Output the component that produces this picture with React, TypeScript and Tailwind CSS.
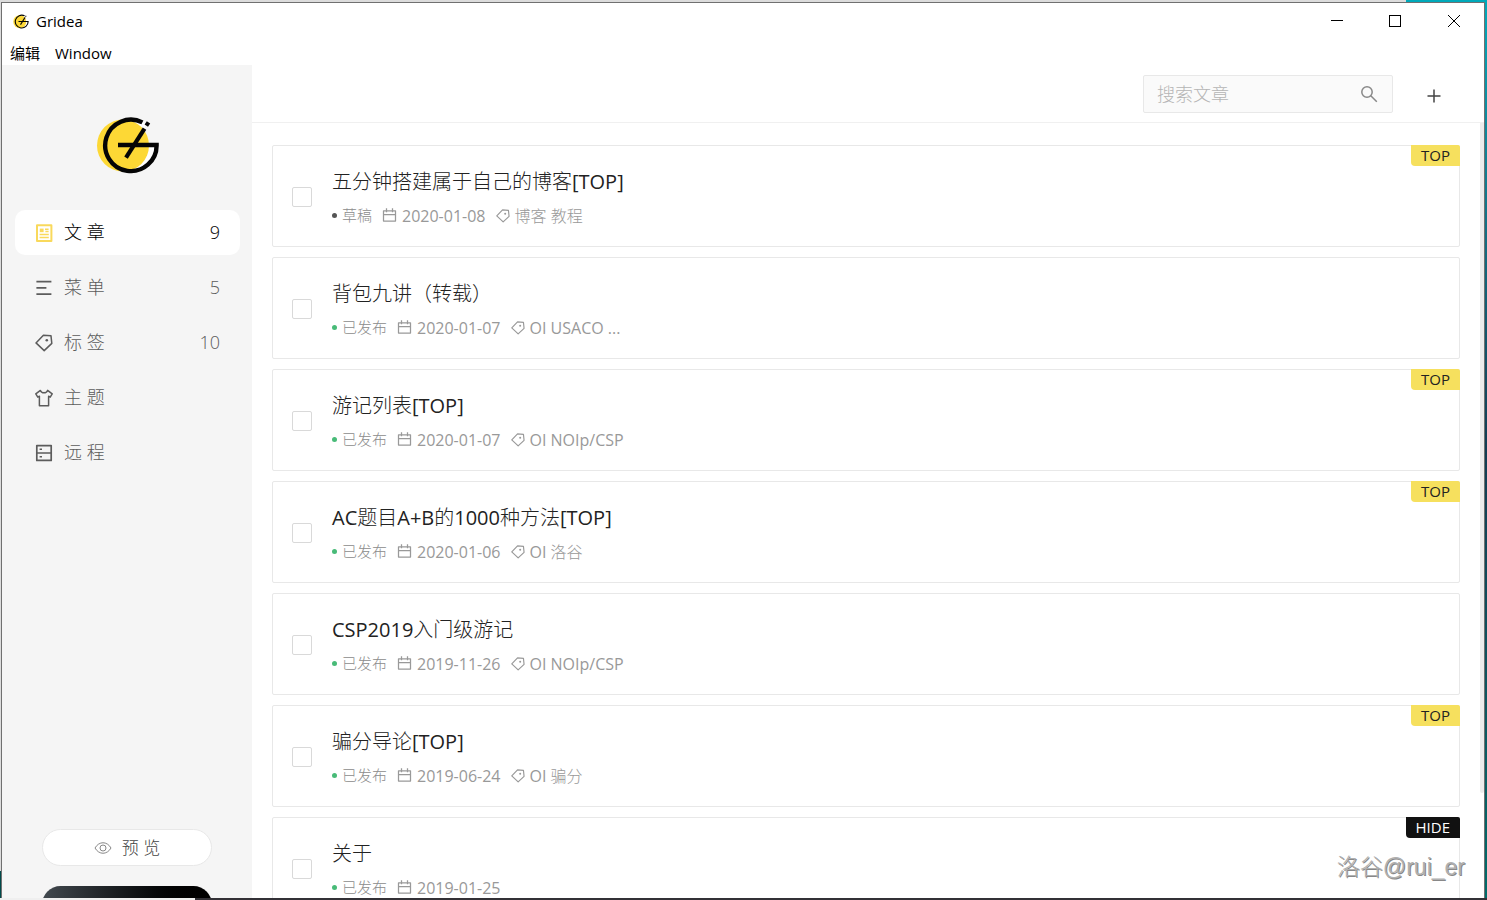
import { FC, ReactNode } from 'react'

type Post = {
  title: string
  date: string
  tags?: string
  draft?: boolean
  badge?: 'TOP' | 'HIDE'
}

const posts: Post[] = [
  { title: '五分钟搭建属于自己的博客[TOP]', date: '2020-01-08', tags: '博客 教程', draft: true, badge: 'TOP' },
  { title: '背包九讲（转载）', date: '2020-01-07', tags: 'OI USACO ...' },
  { title: '游记列表[TOP]', date: '2020-01-07', tags: 'OI NOIp/CSP', badge: 'TOP' },
  { title: 'AC题目A+B的1000种方法[TOP]', date: '2020-01-06', tags: 'OI 洛谷', badge: 'TOP' },
  { title: 'CSP2019入门级游记', date: '2019-11-26', tags: 'OI NOIp/CSP' },
  { title: '骗分导论[TOP]', date: '2019-06-24', tags: 'OI 骗分', badge: 'TOP' },
  { title: '关于', date: '2019-01-25', badge: 'HIDE' },
]

const Logo: FC<{ className: string }> = ({ className }) => (
  <svg viewBox="0 0 64 60" className={className} fill="none" aria-hidden="true">
    <path d="M46 30H60A26 26 0 0 1 34 56ZM36 5L50 8 48 16Z" fill="#fff" />
    <circle cx="27" cy="30.5" r="26" fill="#fdd835" />
    <path d="M46.400 7.400A25.700 25.700 0 1 0 60.600 30H22" stroke="#050505" strokeWidth="4.400" />
    <path d="M48.500 13.600L30 42.600" stroke="#050505" strokeWidth="4.200" />
    <path d="M50.800 6.200l3.400 2.200-2.200 3.400-3.400-2.200z" fill="#050505" />
  </svg>
)

const Icon: FC<{ className?: string; children: ReactNode }> = ({ className = 'size-[18px]', children }) => (
  <svg
    viewBox="0 0 18 18"
    className={`shrink-0 ${className}`}
    fill="none"
    stroke="currentColor"
    strokeWidth="1.5"
    strokeLinejoin="round"
    aria-hidden="true"
  >
    {children}
  </svg>
)

const tagShape = (
  <>
    <path d="M8.400 1.200L16 1.800l.8 7.600-7.600 7.200L1 8.900z" />
    <circle cx="11.800" cy="6.200" r="1.300" fill="currentColor" stroke="none" />
  </>
)

const menus = [
  {
    label: '文 章',
    count: 9,
    active: true,
    icon: (
      <>
        <path d="M2 1.200h14.400v15.800H2z" strokeWidth="2" />
        <path d="M4.800 4.600h3.800v3.600H4.800z" fill="currentColor" stroke="none" />
        <path d="M10 5.200h3.600M10.400 7.600h3.200M4.600 10.600h9.200M4.600 13.600h9.200" />
      </>
    ),
  },
  { label: '菜 单', count: 5, icon: <path d="M1.400 2.600h15M1.400 8.900h10M1.400 15.200h15" strokeWidth="1.700" /> },
  { label: '标 签', count: 10, icon: tagShape },
  {
    label: '主 题',
    icon: <path d="M5.400 1.400L.8 4.900l2 3.200 1.600-.9v9.600h9.200V7.200l1.600.9 2-3.200-4.600-3.500C11.400 4.500 6.600 4.500 5.400 1.400z" />,
  },
  {
    label: '远 程',
    icon: (
      <>
        <path d="M1.800 1.600h14.400v14.800H1.800zM1.800 9h14.400" strokeWidth="1.700" />
        <path d="M4.600 5.300h2.400M4.600 12.700h2.400" />
      </>
    ),
  },
]

const TitleBar = () => (
  <header className="shrink-0 bg-white text-[15px] text-black">
    <div className="flex h-9 items-center justify-between pl-[11px]">
      <div className="flex items-center gap-[7px]">
        <Logo className="h-[15px] w-4" />
        <span>Gridea</span>
      </div>
      <div className="flex h-full">
        <button type="button" aria-label="最小化" className="flex w-[58px] items-center justify-center">
          <svg className="size-3" viewBox="0 0 12 12" stroke="currentColor" shapeRendering="crispEdges">
            <path d="M0 5.500h12" />
          </svg>
        </button>
        <button type="button" aria-label="最大化" className="flex w-[58px] items-center justify-center">
          <svg className="size-3" viewBox="0 0 12 12" fill="none" stroke="currentColor" shapeRendering="crispEdges">
            <path d="M.5.5h11v11H.5z" />
          </svg>
        </button>
        <button type="button" aria-label="关闭" className="flex w-[60px] items-center justify-center">
          <svg className="size-3" viewBox="0 0 12 12" stroke="currentColor">
            <path d="M0 0l12 12M12 0L0 12" />
          </svg>
        </button>
      </div>
    </div>
    <nav className="flex h-[26px] items-center gap-[15px] pt-[2px] pl-2 font-['Open_Sans','Noto_Sans_CJK_SC',sans-serif]">
      <button type="button">编辑</button>
      <button type="button">Window</button>
    </nav>
  </header>
)

const Sidebar = () => (
  <aside className="flex w-[250px] shrink-0 flex-col overflow-hidden bg-[#f5f5f5]">
    <div className="flex shrink-0 justify-center pt-[50px] pb-[35px] pl-[2px]">
      <Logo className="h-[60px] w-16" />
    </div>
    <nav className="flex min-h-0 flex-1 flex-col gap-[10px] pr-3 pl-[13px]">
      {menus.map(({ label, count, active, icon }) => (
        <a
          key={label}
          href="#"
          className={`flex h-[45px] shrink-0 items-center rounded-[10px] px-5 text-lg ${
            active ? 'bg-white text-black' : 'text-[#5c5c5c]'
          }`}
        >
          <Icon className={active ? 'size-[18px] text-[#f9d95c]' : 'size-[18px]'}>{icon}</Icon>
          <span className="ml-[11px] flex-1 pb-[2px]">{label}</span>
          <span className="pb-[2px] font-light">{count}</span>
        </a>
      ))}
    </nav>
    <div className="flex h-[69px] shrink-0 flex-col gap-5 overflow-hidden px-10 text-[17px]">
      <button
        type="button"
        className="flex h-[37px] shrink-0 items-center justify-center gap-[10px] rounded-full border border-[#e8e8e8] bg-white text-[#444]"
      >
        <Icon className="size-[18px] text-[#888]">
          <path d="M1 9c4-7 12-7 16 0-4 7-12 7-16 0z" strokeWidth="1" />
          <circle cx="9" cy="9" r="3" strokeWidth="1" />
        </Icon>
        预 览
      </button>
      <button
        type="button"
        aria-label="同步"
        className="flex h-[37px] shrink-0 justify-center rounded-full bg-linear-to-r from-[#434a50] to-black pt-[10px] pr-9 text-white"
      >
        <Icon>
          <path d="M5 13a4 4 0 0 1 0-8 4.500 4.500 0 0 1 8 0 4 4 0 0 1 0 8M9 16V8" strokeWidth="1" />
        </Icon>
      </button>
    </div>
  </aside>
)

const PostCard: FC<{ post: Post }> = ({ post }) => (
  <article className="relative flex h-[102px] shrink-0 items-center gap-5 rounded-xs border border-[#e8e8e8] px-[19px] pt-[2px]">
    <input
      type="checkbox"
      aria-label={post.title}
      className="size-5 shrink-0 appearance-none rounded-xs border border-[#d9d9d9] bg-white"
    />
    <div className="flex flex-col gap-2 pt-px">
      <a href="#" className="text-xl leading-7 text-[#222]">
        {post.title}
      </a>
      <div className="flex h-6 items-center gap-[10px] text-[15px] text-[#8c8c8c]">
        <span className="flex items-center gap-[5px]">
          <i className={`size-[5px] rounded-full ${post.draft ? 'bg-[#555]' : 'bg-[#48bb78]'}`} />
          {post.draft ? '草稿' : '已发布'}
        </span>
        <span className="flex items-center gap-[5px]">
          <Icon className="size-[15px] text-[#999]">
            <path d="M1.800 3.400h14.400v12.200H1.800zM1.800 7.800h14.400M5.400 .2v5M12.600 .2v5" />
          </Icon>
          <time className="text-base text-[#999]">{post.date}</time>
        </span>
        {post.tags && (
          <span className="flex items-center gap-[5px]">
            <Icon className="size-[14px] text-[#999]">{tagShape}</Icon>
            <span className="text-base text-[#999]">{post.tags}</span>
          </span>
        )}
      </div>
    </div>
    {post.badge && (
      <span
        className={`absolute -top-px -right-px rounded-tr-xs rounded-bl-sm px-[10px] text-[15px] leading-[21px] ${
          post.badge === 'TOP' ? 'bg-[#f6e05e] text-[#222]' : 'bg-[#111] text-white'
        }`}
      >
        {post.badge}
      </span>
    )}
  </article>
)

const App = () => {
  return (
    <div className="relative flex h-screen flex-col overflow-hidden font-['Open_Sans','Noto_Sans_CJK_SC_Light','Noto_Sans_CJK_SC',sans-serif]">
      <div className="flex h-[2px] shrink-0">
        <div className="flex-1 bg-[#dcdcdc]" />
        <div className="w-[81px] bg-[#00a9ba]" />
      </div>
      <div className="flex min-h-0 flex-1">
        <div className="w-px bg-linear-to-b from-[#dcdcdc] from-97% to-[#004a4a] to-97%" />
        <div className="flex min-h-0 min-w-0 flex-1 flex-col border-t border-r border-l border-[#707070] bg-white">
          <TitleBar />
          <div className="flex min-h-0 flex-1">
            <Sidebar />
            <main className="flex min-w-0 flex-1 flex-col">
              <div className="flex h-[58px] shrink-0 items-center justify-end gap-[21px] border-b border-[#f0f0f0] pr-[30px]">
                <label className="flex h-[38px] w-[250px] items-center rounded-xs border border-[#e8e8e8] bg-[#fafafa] pr-[14px] pl-[13px]">
                  <input
                    type="text"
                    placeholder="搜索文章"
                    aria-label="搜索文章"
                    className="min-w-0 flex-1 bg-transparent text-lg outline-none placeholder:text-[#b5b5b5]"
                  />
                  <Icon className="size-[18px] text-[#888]">
                    <circle cx="7" cy="7" r="5.200" />
                    <path d="M10.800 10.800l6 6" />
                  </Icon>
                </label>
                <button
                  type="button"
                  aria-label="新文章"
                  className="flex size-10 items-center justify-center pt-1 text-[#444]"
                >
                  <svg className="size-[14px]" viewBox="0 0 14 14" stroke="currentColor" strokeWidth="1.500">
                    <path d="M7 .5v13M.5 7h13" />
                  </svg>
                </button>
              </div>
              <div className="flex min-h-0 flex-1 overflow-hidden">
                <section className="flex min-w-0 flex-1 flex-col gap-[10px] pt-[22px] pr-5 pl-5">
                  {posts.map((post) => (
                    <PostCard key={post.title} post={post} />
                  ))}
                </section>
                <div className="h-[670px] w-1 rounded-b-xs bg-[#ececec]" />
              </div>
            </main>
          </div>
        </div>
        <div className="w-[2px] bg-linear-to-b from-[#00a9ba] via-[#123c52] to-[#006b69]" />
      </div>
      <div className="flex h-[2px] shrink-0">
        <div className="w-[195px] bg-[#efefef]" />
        <div className="flex-1 bg-[#333136]" />
      </div>
      <span className="absolute right-[22px] bottom-[17px] font-['Liberation_Sans','Noto_Sans_CJK_SC',sans-serif] text-[23px] leading-8 font-light text-[#b0b0b0] [text-shadow:1px_1px_0_#888]">
        洛谷@rui_er
      </span>
    </div>
  )
}

export default App
